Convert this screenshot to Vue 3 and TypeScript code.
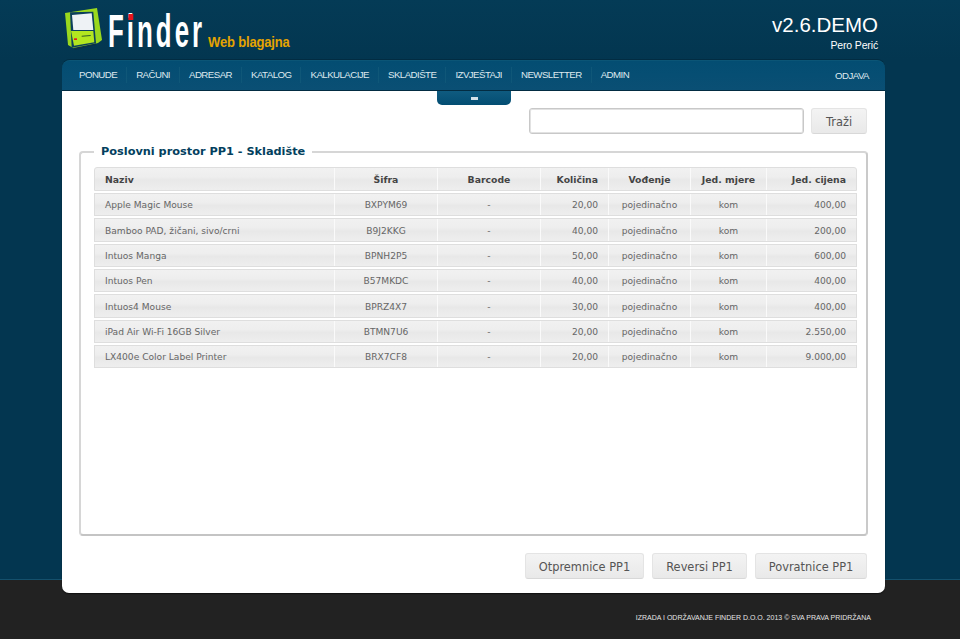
<template>
  <div class="page">
    <div class="top">
      <div class="wrap">
        <header class="head">
          <div class="brand">
            <svg class="logo" width="40" height="42" viewBox="0 0 40 42">
              <path d="M0 5 L32 0 L37 32 L33 35 L10 41 L3 37 Z" fill="#9ad81e" />
              <path d="M5 4.3 L28.3 3.7 L31 35.3 L6.7 39.7 Z" fill="#0c3f5c" />
              <path d="M7 7 L26.7 5.3 L28.3 22 L8.3 22 Z" fill="#eef2f5" />
              <path d="M6 23 L28.3 23 L29.3 34.3 L9 37.7 Z" fill="#b2e620" />
              <path d="M16.7 27.7 L25.7 27 L25.7 28 L16.7 28.7 Z" fill="#2f5c28" />
              <rect x="9" y="30.3" width="3" height="1.7" fill="#e02020" />
              <path d="M8 40 L31 35.5 L31 37 L10 42 Z" fill="#0a3048" />
            </svg>
            <div class="name"><span class="finder">Finder<i class="dot"></i></span></div>
            <span class="sub">Web blagajna</span>
          </div>
          <div class="version">
            <div class="ver">v2.6.DEMO</div>
            <div class="user">Pero Perić</div>
          </div>
        </header>

        <nav class="nav">
          <a v-for="item in menu" :key="item" class="nav-item">{{ item }}</a>
          <a class="nav-out">ODJAVA</a>
        </nav>

        <main class="panel">
          <div class="toggle"><span class="minus"></span></div>

          <div class="search">
            <input class="search-input" type="text" />
            <button class="btn search-btn">Traži</button>
          </div>

          <fieldset class="box">
            <legend class="legend">Poslovni prostor PP1 - Skladište</legend>
            <div class="table">
              <div class="row row-head">
                <div v-for="col in columns" :key="col.label" class="cell" :class="col.cls">{{ col.label }}</div>
              </div>
              <div v-for="row in rows" :key="row.sifra" class="row">
                <div class="cell c-name">{{ row.naziv }}</div>
                <div class="cell c-sifra">{{ row.sifra }}</div>
                <div class="cell c-bar">-</div>
                <div class="cell c-kol">{{ row.kolicina }}</div>
                <div class="cell c-vod">pojedinačno</div>
                <div class="cell c-jed">kom</div>
                <div class="cell c-cij">{{ row.cijena }}</div>
              </div>
            </div>
          </fieldset>

          <div class="actions">
            <button class="btn act-1">Otpremnice PP1</button>
            <button class="btn act-2">Reversi PP1</button>
            <button class="btn act-3">Povratnice PP1</button>
          </div>
        </main>
      </div>
    </div>
    <footer class="foot">IZRADA I ODRŽAVANJE FINDER D.O.O. 2013 © SVA PRAVA PRIDRŽANA</footer>
  </div>
</template>

<script setup lang="ts">
const menu: string[] = ['PONUDE', 'RAČUNI', 'ADRESAR', 'KATALOG', 'KALKULACIJE', 'SKLADIŠTE', 'IZVJEŠTAJI', 'NEWSLETTER', 'ADMIN']

const columns = [
  { label: 'Naziv', cls: 'c-name' },
  { label: 'Šifra', cls: 'c-sifra' },
  { label: 'Barcode', cls: 'c-bar' },
  { label: 'Količina', cls: 'c-kol' },
  { label: 'Vođenje', cls: 'c-vod' },
  { label: 'Jed. mjere', cls: 'c-jed' },
  { label: 'Jed. cijena', cls: 'c-cij' },
]

const rows = [
  { naziv: 'Apple Magic Mouse', sifra: 'BXPYM69', kolicina: '20,00', cijena: '400,00' },
  { naziv: 'Bamboo PAD, žičani, sivo/crni', sifra: 'B9J2KKG', kolicina: '40,00', cijena: '200,00' },
  { naziv: 'Intuos Manga', sifra: 'BPNH2P5', kolicina: '50,00', cijena: '600,00' },
  { naziv: 'Intuos Pen', sifra: 'B57MKDC', kolicina: '40,00', cijena: '400,00' },
  { naziv: 'Intuos4 Mouse', sifra: 'BPRZ4X7', kolicina: '30,00', cijena: '400,00' },
  { naziv: 'iPad Air Wi-Fi 16GB Silver', sifra: 'BTMN7U6', kolicina: '20,00', cijena: '2.550,00' },
  { naziv: 'LX400e Color Label Printer', sifra: 'BRX7CF8', kolicina: '20,00', cijena: '9.000,00' },
]
</script>

<style>
html, body { margin: 0; padding: 0; background: #222; }
</style>

<style scoped>
.page {
  width: 960px;
  height: 639px;
  overflow: hidden;
  display: flex;
  flex-direction: column;
  font-family: "Liberation Sans", Arial, sans-serif;
}
.top {
  height: 580px;
  flex: none;
  background: linear-gradient(#043b56, #033650 60px, #033650);
  border-bottom: 1px solid #14506c;
  box-sizing: border-box;
}
.wrap {
  width: 823px;
  margin-left: 62px;
  position: relative;
  z-index: 1;
}
.head {
  height: 60px;
  display: flex;
  justify-content: space-between;
  box-sizing: border-box;
  padding: 8px 7px 0 3px;
}
.brand {
  display: flex;
  align-items: flex-start;
}
.logo { flex: none; margin-right: 3px; }
.name { width: 100px; height: 50px; }
.finder {
  display: inline-block;
  position: relative;
  font-size: 47px;
  line-height: 46px;
  font-weight: bold;
  letter-spacing: 5.5px;
  color: #fff;
  transform: scaleX(0.55);
  transform-origin: left top;
  white-space: nowrap;
}
.dot {
  position: absolute;
  left: 37px;
  top: 6px;
  width: 9px;
  height: 6px;
  background: #e8141c;
}
.sub {
  margin: 24px 0 0 0;
  font-size: 15.5px;
  line-height: 20px;
  font-weight: bold;
  color: #e5a400;
  letter-spacing: -0.2px;
  white-space: nowrap;
  transform: scaleX(0.84);
  transform-origin: left top;
}
.version {
  text-align: right;
  color: #fff;
}
.ver { font-size: 20.5px; line-height: 22px; margin-top: 6px; }
.user { font-size: 10.5px; line-height: 14px; margin-top: 2px; letter-spacing: -0.15px; }
.nav {
  height: 31px;
  box-sizing: border-box;
  display: flex;
  align-items: center;
  background: linear-gradient(#034d72, #0a4f74);
  border-top: 1px solid #0b5576;
  border-bottom: 1px solid #022c42;
  border-radius: 8px 8px 0 0;
  padding: 0 16px 1px 8px;
  box-shadow: 0 -1px 0 #022c42;
}
.nav-item {
  padding: 0 9px;
  line-height: 16px;
  font-size: 9.7px;
  letter-spacing: -0.55px;
  color: #dfe9ef;
  border-right: 1px solid #0f5778;
}
.nav-item:nth-child(9) { border-right: 0; }
.nav-out {
  margin-left: auto;
  font-size: 9.7px;
  letter-spacing: -0.55px;
  color: #dfe9ef;
}
.panel {
  height: 502px;
  box-sizing: border-box;
  background: #fff;
  border-radius: 0 0 7px 7px;
  box-shadow: 0 1px 1px #111;
  padding: 17px 17px 14px 17px;
  position: relative;
  display: flex;
  flex-direction: column;
}
.toggle {
  position: absolute;
  left: 375px;
  top: 0;
  width: 74px;
  height: 14px;
  background: linear-gradient(#0f5b80, #034d72);
  border-radius: 0 0 5px 5px;
  display: flex;
  align-items: center;
  justify-content: center;
}
.minus { width: 7px; height: 3px; background: #d5e2e9; }
.search {
  display: flex;
  justify-content: flex-end;
  gap: 7px;
  height: 26px;
  margin-right: 1px;
}
.search-input {
  width: 275px;
  height: 26px;
  box-sizing: border-box;
  border: 1px solid #c8c8c8;
  box-shadow: 0 0 0 1px #e2e2e2 inset;
  border-radius: 3px;
  background: #fff;
  outline: none;
  padding: 0 6px;
}
.btn {
  height: 26px;
  padding: 1px 0 0;
  box-sizing: border-box;
  border: 1px solid #e4e4e4;
  border-bottom-color: #d8d8d8;
  border-radius: 3px;
  background: linear-gradient(#f3f3f3, #e9e9e9);
  font-family: "DejaVu Sans", Verdana, sans-serif;
  font-size: 11.4px;
  color: #555;
}
.search-btn { width: 56px; }
.box {
  flex: 1;
  min-height: 0;
  margin: 11px 0 0;
  padding: 8px 9px 0 13px;
  border: 2px solid #d6d6d6;
  border-right-color: #cacaca;
  border-bottom-color: #c4c4c4;
  border-radius: 4px;
  min-width: 0;
  box-sizing: border-box;
}
.legend {
  margin-left: 0;
  padding: 0 7px;
  font-family: "DejaVu Sans", Verdana, sans-serif;
  font-size: 11.3px;
  line-height: 14px;
  font-weight: bold;
  color: #033f5e;
}
.table {
  display: flex;
  flex-direction: column;
  gap: 2px;
  font-family: "DejaVu Sans", Verdana, sans-serif;
  font-size: 9.1px;
  color: #666;
}
.row {
  display: grid;
  grid-template-columns: 239px 103px 103px 68px 82px 76px 90px;
  height: 23.35px;
  box-sizing: border-box;
  border: 1px solid #dedede;
  background: linear-gradient(#f1f1f1, #eeeeee 40%, #e8e8e8 55%, #eeeeee);
}
.row-head {
  height: 24px;
  border-radius: 3px 3px 0 0;
  font-weight: bold;
  font-size: 9.3px;
  color: #444;
}
.cell {
  display: flex;
  align-items: center;
  padding: 1px 10px 0;
  border-left: 1px solid #fafafa;
  white-space: nowrap;
  min-width: 0;
}
.c-name { border-left: 0; }
.c-sifra, .c-bar, .c-vod, .c-jed { justify-content: center; }
.c-kol, .c-cij { justify-content: flex-end; }
.actions {
  display: flex;
  justify-content: flex-end;
  gap: 8px;
  margin: 17px 1px 0 0;
}
.act-1 { width: 119px; }
.act-2 { width: 95px; }
.act-3 { width: 112px; }
.foot {
  flex: 1;
  background: #222;
  color: #e4e4e4;
  font-size: 7px;
  line-height: 12px;
  text-align: right;
  padding: 32px 89px 0 0;
  white-space: nowrap;
}
</style>
